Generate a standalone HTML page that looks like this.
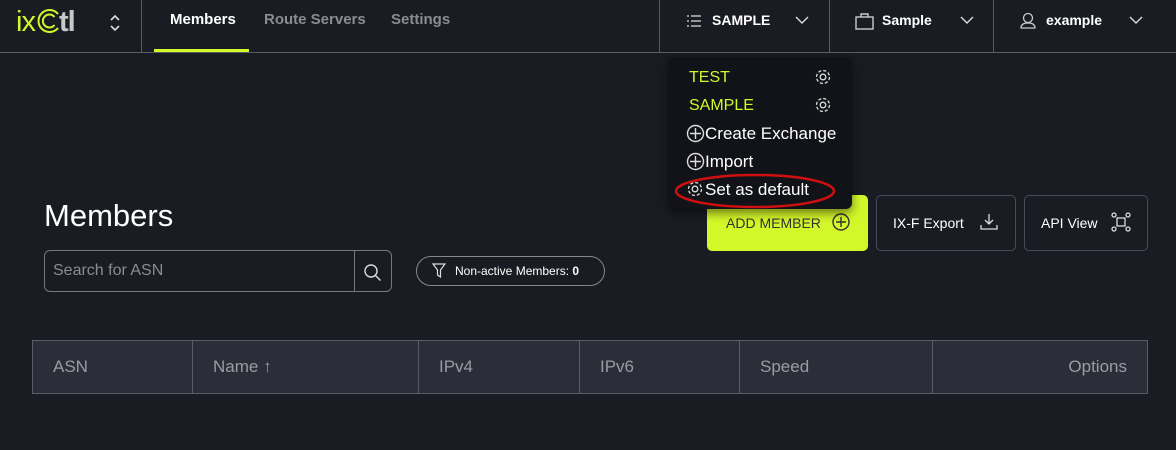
<!DOCTYPE html>
<html><head><meta charset="utf-8"><style>
*{box-sizing:border-box;margin:0;padding:0}
body{width:1176px;height:450px;background:#1a1c23;font-family:"Liberation Sans",sans-serif;color:#fff;position:relative;overflow:hidden}
.a{position:absolute}
.hdr{left:0;top:0;width:1176px;height:53px;border-bottom:1px solid #5a5c63}
.vs{top:0;height:52px;width:1px;background:#5a5c63}
.nav{font-size:15px;font-weight:bold;top:11px}
.btn{border:1px solid #4a4c55;border-radius:5px;height:56px;top:195px;font-size:15px;display:flex;align-items:center}
.th{top:340px;height:54px;background:#2b2e38;border:1px solid #5a5c63;font-size:17px;color:#9a9ca3;display:flex;align-items:center;padding-left:20px}
.dd{left:668px;top:57px;width:184px;height:152px;background:#111318;border-radius:6px;box-shadow:0 4px 10px rgba(0,0,0,.5)}
.di{font-size:17px;position:absolute;left:17px}
</style></head><body>
<div class="a hdr"></div>
<div class="a" style="left:16px;top:6px;font-size:29px;letter-spacing:-1px"><span style="color:#d4f72a">ix</span></div>
<svg class="a" style="left:36px;top:8px" width="26" height="26" fill="none" stroke="#d4f72a" stroke-width="2"><path d="M22 6A11 11 0 1 0 22 20"/><path d="M18.5 9A6.5 6.5 0 1 0 18.5 17"/></svg>
<div class="a" style="left:59px;top:6px;font-size:29px;font-weight:bold;color:#c8c8c8;letter-spacing:-1px">tl</div>
<svg class="a" style="left:108px;top:13px" width="14" height="20" viewBox="0 0 14 20" fill="none" stroke="#ddd" stroke-width="1.6"><path d="M3 7l4-4 4 4M3 13l4 4 4-4"/></svg>
<div class="a vs" style="left:141px"></div>
<div class="a nav" style="left:170px">Members</div>
<div class="a" style="left:154px;top:49px;width:95px;height:3px;background:#d4f72a"></div>
<div class="a nav" style="left:264px;color:#8a8c93">Route Servers</div>
<div class="a nav" style="left:391px;color:#8a8c93">Settings</div>
<div class="a vs" style="left:659px"></div>
<div class="a vs" style="left:829px"></div>
<div class="a vs" style="left:993px"></div>
<svg class="a" style="left:686px;top:14px" width="16" height="14" fill="none" stroke="#ddd" stroke-width="1.3"><path d="M1 2h2M1 7h2M1 12h2M5 2h10M5 7h10M5 12h10"/></svg>
<div class="a nav" style="left:712px;top:12px;font-size:14px">SAMPLE</div>
<svg class="a" style="left:795px;top:16px" width="14" height="9" fill="none" stroke="#ddd" stroke-width="1.4"><path d="M1 1l6 6 6-6"/></svg>
<svg class="a" style="left:855px;top:12px" width="20" height="18" fill="none" stroke="#ccc" stroke-width="1.4"><rect x="1" y="5" width="17" height="12"/><path d="M6 5V2h7v3"/></svg>
<div class="a nav" style="left:882px;top:12px;font-size:14px">Sample</div>
<svg class="a" style="left:960px;top:16px" width="14" height="9" fill="none" stroke="#ddd" stroke-width="1.4"><path d="M1 1l6 6 6-6"/></svg>
<svg class="a" style="left:1020px;top:12px" width="16" height="17" fill="none" stroke="#ccc" stroke-width="1.3"><circle cx="8" cy="6" r="4.5"/><path d="M1 16c0-4 3-5 7-5s7 1 7 5z"/></svg>
<div class="a nav" style="left:1046px;top:12px;font-size:14px">example</div>
<svg class="a" style="left:1129px;top:16px" width="14" height="9" fill="none" stroke="#ddd" stroke-width="1.4"><path d="M1 1l6 6 6-6"/></svg>

<div class="a" style="left:44px;top:198px;font-size:31px">Members</div>
<div class="a" style="left:44px;top:250px;width:348px;height:42px;border:1px solid #777;border-radius:6px"></div>
<div class="a" style="left:354px;top:251px;width:1px;height:40px;background:#777"></div>
<div class="a" style="left:53px;top:262px;font-size:16px;color:#8a8c93">Search for ASN</div>
<svg class="a" style="left:363px;top:263px" width="19" height="19" fill="none" stroke="#ddd" stroke-width="1.4"><circle cx="8" cy="8" r="6"/><path d="M12.5 12.5l5 5"/></svg>
<div class="a" style="left:416px;top:256px;width:189px;height:30px;border:1px solid #888;border-radius:15px;font-size:12px;display:flex;align-items:center;padding-left:38px">Non-active Members:&nbsp;<b>0</b></div>
<svg class="a" style="left:432px;top:263px" width="14" height="15" fill="none" stroke="#ddd" stroke-width="1.2"><path d="M1 1h12L8.5 7v7l-3-2V7z"/></svg>

<div class="a btn" style="left:707px;width:161px;background:#d4f72a;border-color:#d4f72a;color:#333;padding-left:18px;font-size:14px">ADD MEMBER</div>
<svg class="a" style="left:832px;top:213px" width="18" height="18" fill="none" stroke="#333" stroke-width="1.4"><circle cx="9" cy="9" r="8"/><path d="M9 4v10M4 9h10"/></svg>
<div class="a btn" style="left:876px;width:140px;padding-left:16px;font-size:14px">IX-F Export</div>
<svg class="a" style="left:980px;top:213px" width="18" height="17" fill="none" stroke="#ddd" stroke-width="1.3"><path d="M9 1v10M5 7l4 4 4-4M1 12v4h16v-4"/></svg>
<div class="a btn" style="left:1024px;width:124px;padding-left:16px;font-size:14px">API View</div>
<svg class="a" style="left:1111px;top:212px" width="20" height="20" fill="none" stroke="#ddd" stroke-width="1.3"><rect x="6" y="6" width="8" height="8"/><circle cx="3" cy="3" r="2"/><circle cx="17" cy="3" r="2"/><circle cx="3" cy="17" r="2"/><circle cx="17" cy="17" r="2"/></svg>

<div class="a th" style="left:32px;width:161px">ASN</div>
<div class="a th" style="left:192px;width:227px">Name ↑</div>
<div class="a th" style="left:418px;width:162px">IPv4</div>
<div class="a th" style="left:579px;width:161px">IPv6</div>
<div class="a th" style="left:739px;width:194px">Speed</div>
<div class="a th" style="left:932px;width:216px;justify-content:flex-end;padding-right:20px">Options</div>

<div class="a dd">
<div class="di" style="top:12px;left:21px;color:#d4f72a;font-size:16px">TEST</div>
<div class="di" style="top:40px;left:21px;color:#d4f72a;font-size:16px">SAMPLE</div>
<div class="di" style="top:67px;left:37px">Create Exchange</div>
<div class="di" style="top:95px;left:37px">Import</div>
<div class="di" style="top:123px;left:37px">Set as default</div>
</div>
<svg class="a" style="left:814px;top:68px" width="18" height="18" fill="none" stroke="#ddd" stroke-width="1.3"><circle cx="9" cy="9" r="2.8"/><circle cx="9" cy="9" r="6.5" stroke-dasharray="3.2 1.9"/></svg>
<svg class="a" style="left:814px;top:96px" width="18" height="18" fill="none" stroke="#ddd" stroke-width="1.3"><circle cx="9" cy="9" r="2.8"/><circle cx="9" cy="9" r="6.5" stroke-dasharray="3.2 1.9"/></svg>
<svg class="a" style="left:686px;top:124px" width="19" height="19" fill="none" stroke="#ddd" stroke-width="1.4"><circle cx="9.5" cy="9.5" r="8"/><path d="M9.5 4v11M4 9.5h11"/></svg>
<svg class="a" style="left:686px;top:152px" width="19" height="19" fill="none" stroke="#ddd" stroke-width="1.4"><circle cx="9.5" cy="9.5" r="8"/><path d="M9.5 4v11M4 9.5h11"/></svg>
<svg class="a" style="left:686px;top:180px" width="18" height="18" fill="none" stroke="#ddd" stroke-width="1.3"><circle cx="9" cy="9" r="2.8"/><circle cx="9" cy="9" r="6.5" stroke-dasharray="3.2 1.9"/></svg>
<svg class="a" style="left:674px;top:173px" width="162" height="36"><ellipse cx="81" cy="18" rx="79" ry="16" fill="none" stroke="#d01010" stroke-width="2.5"/></svg>
</body></html>
